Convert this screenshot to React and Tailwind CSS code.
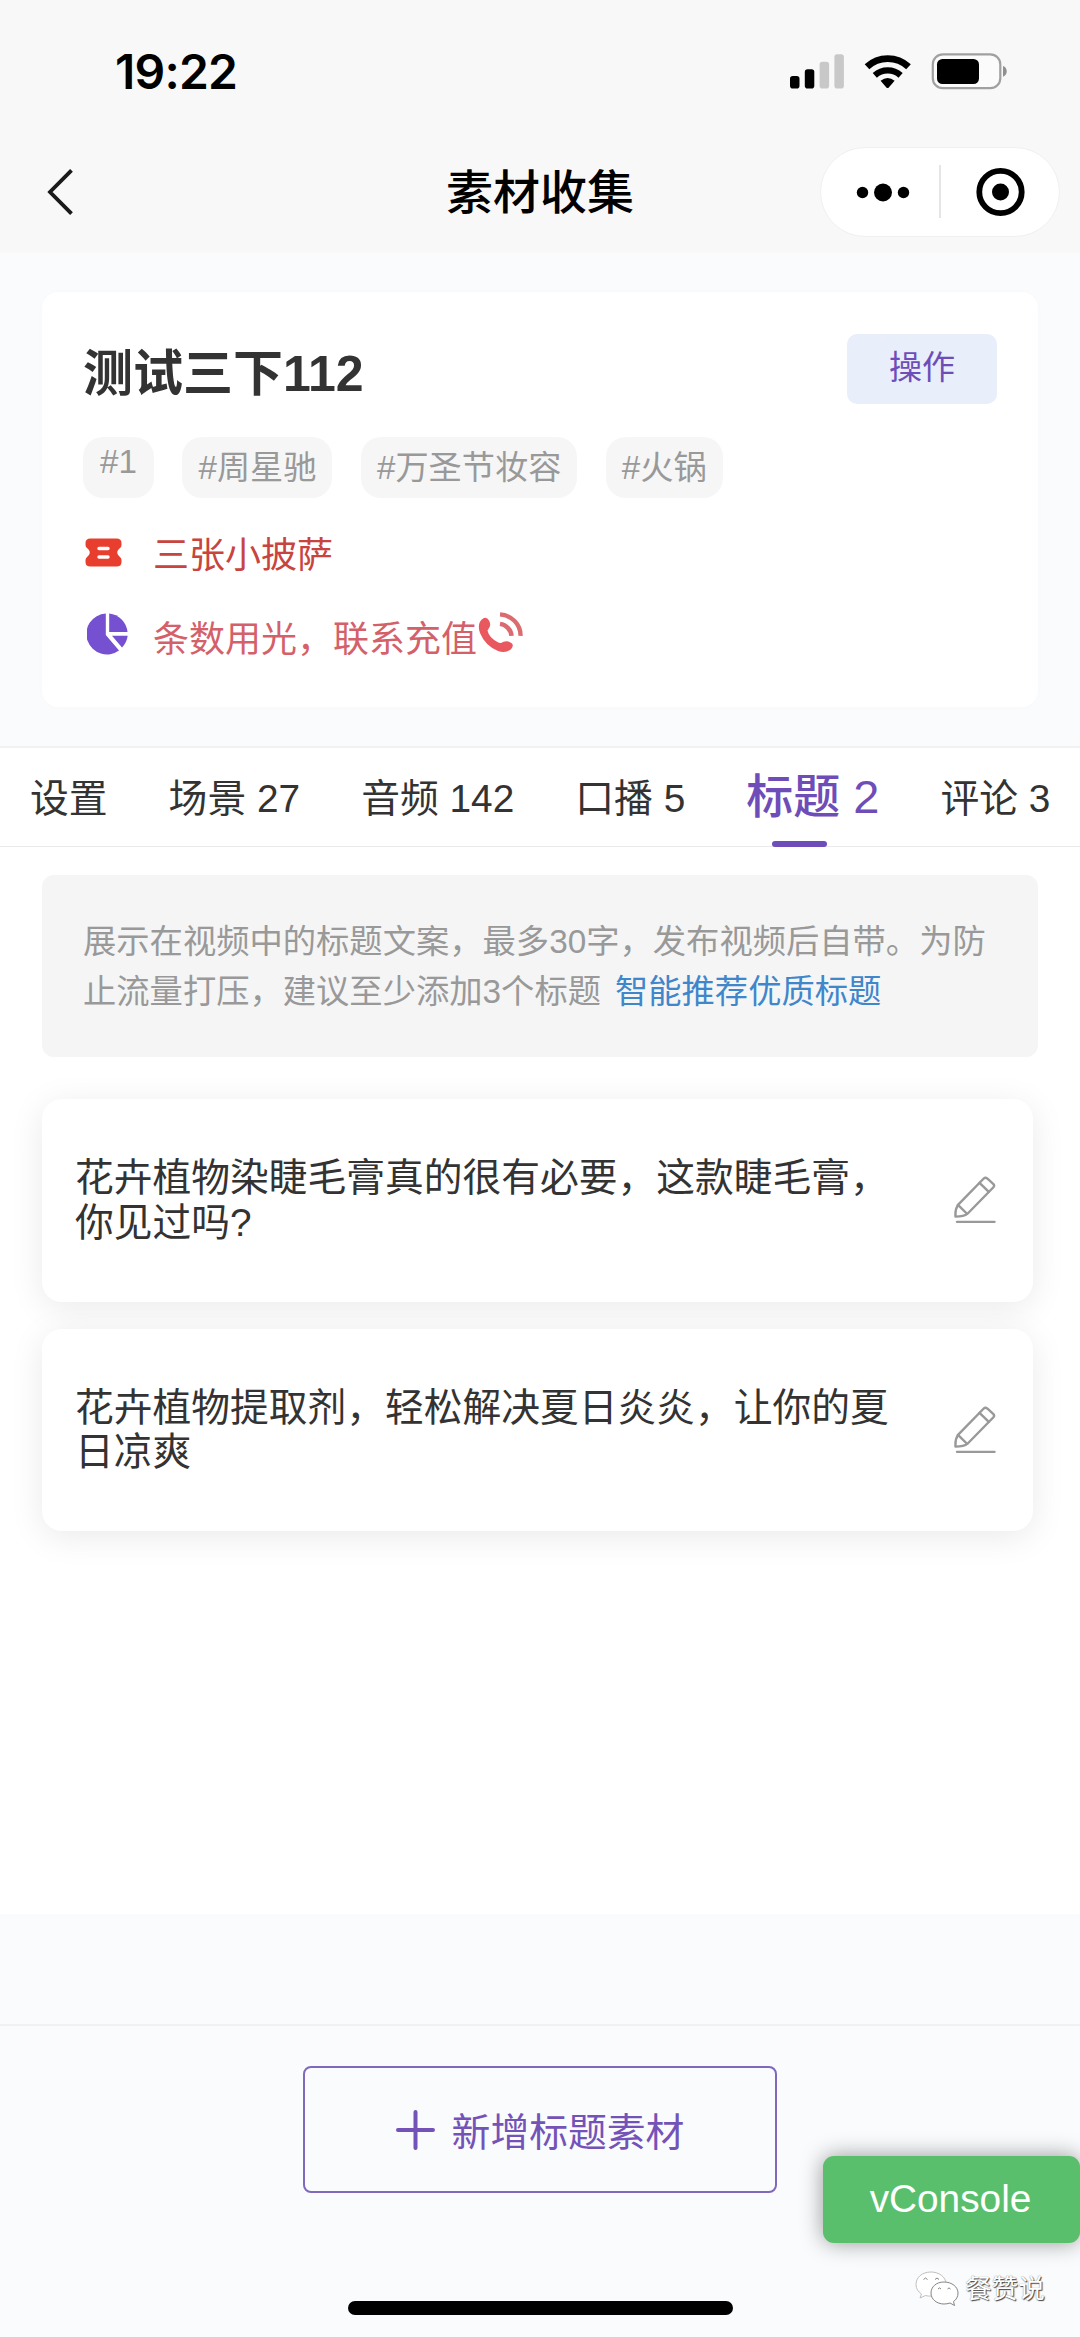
import React, { useState } from 'react';

const TABS = [
  { key: 'setting', label: '设置' },
  { key: 'scene', label: '场景', count: 27 },
  { key: 'audio', label: '音频', count: 142 },
  { key: 'speech', label: '口播', count: 5 },
  { key: 'title', label: '标题', count: 2 },
  { key: 'comment', label: '评论', count: 3 },
];

const TAGS = ['#周星驰', '#万圣节妆容', '#火锅'];

const TITLES = [
  '花卉植物染睫毛膏真的很有必要，这款睫毛膏，你见过吗?',
  '花卉植物提取剂，轻松解决夏日炎炎，让你的夏日凉爽',
];

const StatusIcons = () => (
  <svg width="218" height="37" viewBox="790 53 218 37" fill="none">
    <rect x="790" y="76" width="9.500" height="12.500" rx="2.800" fill="#000" />
    <rect x="804.800" y="69.300" width="9.500" height="19.200" rx="2.800" fill="#000" />
    <rect x="819.600" y="61.700" width="9.500" height="26.800" rx="2.800" fill="#c8c8c8" />
    <rect x="834.400" y="54.300" width="9.500" height="34.200" rx="2.800" fill="#c8c8c8" />
    <path d="M867 66.800A30.500 30.500 0 0 1 908.500 66.800" stroke="#000" strokeWidth="6.800" />
    <path d="M874.800 75.300A19.500 19.500 0 0 1 900.600 75.300" stroke="#000" strokeWidth="6.300" />
    <path d="M880.600 80.800Q887.600 75 894.600 80.800L888.800 87.400Q887.600 88.700 886.400 87.400Z" fill="#000" />
    <rect x="932.800" y="54.400" width="67.500" height="33.800" rx="10" stroke="#a0a0a0" strokeWidth="2.200" fill="#fbfbfb" />
    <rect x="937" y="59" width="42" height="25" rx="5.500" fill="#000" />
    <path d="M1003 66C1008 67.500 1008 75.200 1003 76.700Z" fill="#909090" />
  </svg>
);

const TicketIcon = () => (
  <svg width="37" height="29" viewBox="0 0 37 29">
    <path
      fill="#e83e2e"
      d="M5.500 0.500H31.500Q36.500 0.500 36.500 5V7Q36.500 9 34.500 10.500C31.500 13 31.500 16 34.500 18.500Q36.500 20 36.500 22V24Q36.500 28.500 31.500 28.500H5.500Q0.500 28.500 0.500 24V22Q0.500 20 2.500 18.500C5.500 16 5.500 13 2.500 10.500Q0.500 9 0.500 7V5Q0.500 0.500 5.500 0.500Z"
    />
    <path d="M14 10.500H23M14 19H23" stroke="#fff" strokeWidth="3.400" strokeLinecap="round" />
  </svg>
);

const PieIcon = () => (
  <svg width="42" height="42" viewBox="0 0 42 42" fill="#7550d0">
    <path d="M18.800 0.500V22L32 37.500A20.500 20.500 0 1 1 18.800 0.500Z" />
    <path d="M22.200 0.500A20.500 20.500 0 0 1 40.500 19H22.200Z" />
    <path d="M25 22.800H40.700A20.500 20.500 0 0 1 35 34.500Z" />
  </svg>
);

const PhoneIcon = () => (
  <svg width="45" height="41" viewBox="0 0 45 43" preserveAspectRatio="none" fill="none">
    <path
      fill="#e9575f"
      d="M5.500 6.500Q9 5 11 9Q13 13 11.500 16L9.500 19.500Q11 27 19.500 31.500Q22.500 33.500 25 31.500Q30 29.500 34 33Q36 35.500 33 39Q28 43.500 20 41Q7 35 2 22Q-1.500 11 5.500 6.500Z"
    />
    <path d="M22 12.500A13.500 13.500 0 0 1 33.500 25" stroke="#dc6b70" strokeWidth="4.600" />
    <path d="M22 2.500A22 22 0 0 1 42.500 25" stroke="#dc6b70" strokeWidth="4.400" />
  </svg>
);

const PencilIcon = () => (
  <svg width="42" height="48" viewBox="0 0 42 49" preserveAspectRatio="none" fill="none" stroke="#999" strokeWidth="2.400" strokeLinejoin="round" strokeLinecap="round">
    <path d="M4 29.500L29.500 2.800Q31.500 0.800 33.500 2.800L39.200 8Q41 9.800 39.200 11.800L13.500 38.500Q10 41.500 1.500 41.500Q1 34 4 29.500Z" />
    <path d="M25.500 7L34.800 16.200M4 29.500L13 38.500" />
    <path d="M3 46.800H40.500" />
  </svg>
);

const WechatIcon = () => (
  <svg width="44" height="36" viewBox="0 0 44 36" fill="#fff" stroke="#777" strokeWidth="0.900">
    <path stroke="#b8b8b8" d="M16 1C7 1 1 6.500 1 13.500C1 17.500 3 20.500 6.500 23L5 27L10.500 24.500C18 27 31 22 31 13C31 6 24 1 16 1Z" />
    <path d="M29 11C21 11 16 16 16 22C16 28.500 22 33 29 33C31 33 33 32.700 35 32L39.500 34.500L38.500 30.500C41.500 28.500 43 25.500 43 22C43 16 37 11 29 11Z" />
    <path fill="none" d="M8.500 8.500Q10.500 5.500 12.500 8.500M20 8.500Q22 5.500 24 8.500M23 18Q24.500 15.800 26 18M32.500 18Q34 15.800 35.500 18" />
  </svg>
);

const App = () => {
  const [active, setActive] = useState('title');

  return (
    <div
      lang="zh-CN"
      className="relative flex h-[2337px] w-[1080px] flex-col overflow-hidden bg-[#fafbfd] font-['Liberation_Sans','Noto_Sans_CJK_SC',sans-serif] text-[#333]"
    >
      <header className="h-[253px] shrink-0 bg-[#f8f8f8] text-black">
        <div className="flex h-[143px] items-center justify-between pr-[72px] pl-[115px]">
          <span className="font-['Inter',sans-serif] text-[48px] leading-none font-semibold tracking-[-0.8px]">19:22</span>
          <StatusIcons />
        </div>
        <div className="flex h-[97px] items-center px-[20px]">
          <div className="flex flex-1">
            <svg width="26" height="46" viewBox="0 0 26 46" fill="none" stroke="#1a1a1a" strokeWidth="3.800" className="ml-[27px]">
              <path d="M24.500 1.300L3 23L24.500 44.700" />
            </svg>
          </div>
          <h1 className="pt-px text-[47px] leading-none font-medium">素材收集</h1>
          <div className="flex flex-1 justify-end">
            <div className="flex h-[90px] w-[240px] items-center rounded-full border border-[#f0f0f0] bg-white">
              <svg width="238" height="88" viewBox="0 0 238 88">
                <circle cx="41.500" cy="44.500" r="5.700" />
                <circle cx="62" cy="44.500" r="9" />
                <circle cx="82.500" cy="44.500" r="5.700" />
                <path d="M119 17V70" stroke="#ddd" strokeWidth="1.500" />
                <circle cx="179.500" cy="44" r="21.200" fill="none" stroke="#000" strokeWidth="5.800" />
                <circle cx="179.500" cy="44" r="8.500" />
              </svg>
            </div>
          </div>
        </div>
      </header>

      <section className="mx-[42px] mt-[39px] h-[415px] shrink-0 rounded-2xl bg-white px-[41px] shadow-[0_0_14px_rgba(0,0,0,0.012)]">
        <div className="flex items-start justify-between pt-[42px]">
          <h2 className="pt-[12px] text-[50px] leading-[56px] font-bold">测试三下112</h2>
          <button className="h-[70px] w-[150px] rounded-[10px] bg-[#e8effa] pb-[4px] text-[33px] leading-none text-[#6f4db8]">操作</button>
        </div>
        <div className="mt-[33px] flex gap-[28.500px] text-[33.200px] text-[#999]">
          <span className="h-[61px] rounded-[20px] bg-[#f6f6f6] px-[17px] leading-[50px]">#1</span>
          {TAGS.map((tag) => (
            <span key={tag} className="h-[61px] rounded-[20px] bg-[#f6f6f6] px-[16px] leading-[61px]">
              {tag}
            </span>
          ))}
        </div>
        <div className="mt-[33px] flex h-[50px] items-center text-[36px] text-[#c8443e]">
          <div className="ml-[2px] w-[68px] pb-[8px]"><TicketIcon /></div>
          <span className="leading-none">三张小披萨</span>
        </div>
        <div className="mt-[33px] flex h-[50px] items-center text-[36px] text-[#d4606a]">
          <div className="ml-[4px] w-[66px] pb-[10px]"><PieIcon /></div>
          <span className="pt-px leading-none">条数用光，联系充值</span>
          <div className="ml-[1px] pb-[14px]"><PhoneIcon /></div>
        </div>
      </section>

      <nav className="mt-[39px] flex h-[101px] shrink-0 gap-[61px] border-t-2 border-b border-t-[#eff1f3] border-b-[#e9e9e9] bg-white pl-[30px]">
        {TABS.map((tab) => (
          <button
            key={tab.key}
            onClick={() => setActive(tab.key)}
            className={
              tab.key === active
                ? 'relative h-full shrink-0 text-[47px] leading-[98px] font-medium whitespace-nowrap text-[#6f4db8]'
                : 'relative h-full shrink-0 pt-px text-[38.800px] leading-[99px] whitespace-nowrap'
            }
          >
            {tab.label}
            {tab.count !== undefined && ` ${tab.count}`}
            {tab.key === active && (
              <span className="absolute -bottom-px left-1/2 -ml-[41px] h-[6px] w-[55px] rounded-[3px] bg-[#6f4db8]" />
            )}
          </button>
        ))}
      </nav>

      <main className="h-[1067px] shrink-0 bg-white px-[42px] pt-[28px]">
        <p className="h-[182px] rounded-xl bg-[#f5f5f5] pt-[42px] pl-[41px] text-[33.300px] leading-[49.800px] text-[#999]">
          展示在视频中的标题文案，最多30字，发布视频后自带。为防
          <br />
          止流量打压，建议至少添加3个标题
          <a className="ml-[14px] text-[#3f86cb]">智能推荐优质标题</a>
        </p>
        <ul className="mt-[42px] mr-[5px] flex flex-col gap-[27px]">
          {TITLES.map((text) => (
            <li
              key={text}
              className="flex h-[202.500px] items-center justify-between rounded-[20px] bg-white pr-[37px] pl-[33px] shadow-[0_6px_34px_rgba(0,0,0,0.085)]"
            >
              <p className="w-[830px] pt-px text-[38.750px] leading-[44.300px]">{text}</p>
              <PencilIcon />
            </li>
          ))}
        </ul>
      </main>

      <footer className="mt-[110px] flex flex-1 flex-col items-center border-t-2 border-[#eff1f3] pt-[40px]">
        <button className="flex h-[127px] w-[474px] items-center justify-center rounded-[8px] border-2 border-[#8068bb] text-[38.800px] leading-none text-[#7453b8]">
          <svg width="39" height="40" viewBox="0 0 39 40" stroke="#7453b8" strokeWidth="4" strokeLinecap="round" className="mr-[17px]">
            <path d="M2 20H37M19.500 2V38" />
          </svg>
          <span className="pt-[7px]">新增标题素材</span>
        </button>
        <div className="mt-[108px] h-[14px] w-[385px] rounded-full bg-black" />
      </footer>

      <button className="absolute top-[2156px] left-[823px] h-[87px] w-[257px] rounded-[11px] bg-[#5abf6d] pr-[2px] text-[38.800px] leading-none text-white shadow-[0_0_22px_rgba(0,0,0,0.4)]">
        vConsole
      </button>
      <div className="absolute top-[2270px] left-[915px] flex items-center gap-[6px]">
        <WechatIcon />
        <span className="text-[26.600px] leading-[38px] text-white [text-shadow:1px_1px_1px_#444,0_0_1px_#777]">餐赞说</span>
      </div>
    </div>
  );
};

export default App;
